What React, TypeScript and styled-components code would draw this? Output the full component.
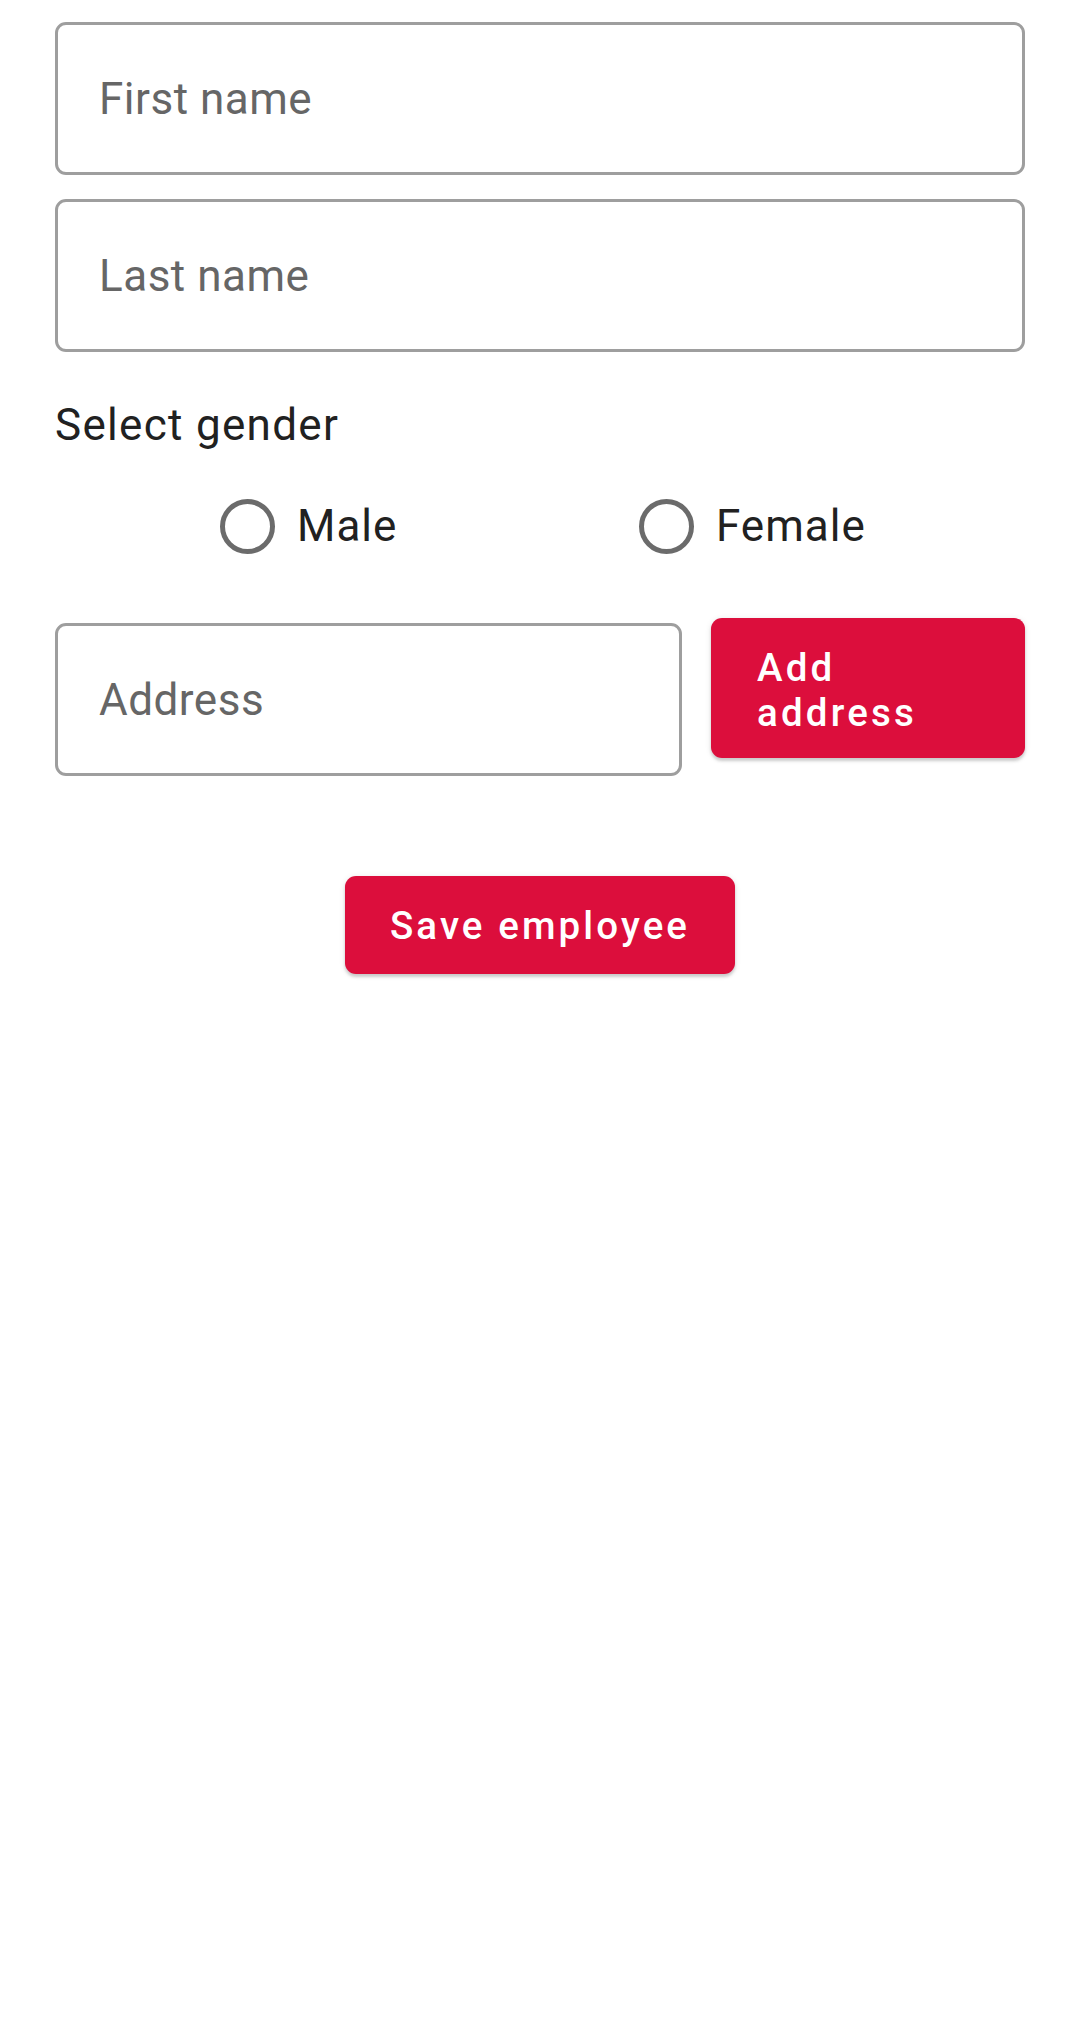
import styled, { createGlobalStyle } from "styled-components";

const GlobalStyle = createGlobalStyle`
  html, body {
    margin: 0;
    padding: 0;
    background: #ffffff;
  }
  body {
    font-family: Roboto, "Noto Sans", "Liberation Sans", sans-serif;
  }
`;

const Page = styled.div`
  width: 1080px;
  min-height: 2022px;
  box-sizing: border-box;
  padding: 22px 55px 0;
  display: flex;
  flex-direction: column;
`;

const Field = styled.input`
  box-sizing: border-box;
  width: 100%;
  height: 153px;
  border: 3px solid #9e9e9e;
  border-radius: 11px;
  padding: 0 41px;
  font-family: Roboto, "Liberation Sans", sans-serif;
  font-size: 44px;
  letter-spacing: 0.5px;
  color: #212121;
  outline: none;
  background: #fff;

  &::placeholder {
    color: #666666;
    opacity: 1;
  }
`;

const NameField = styled(Field)`
  & + & {
    margin-top: 24px;
  }
`;

const SectionLabel = styled.div`
  margin-top: 47px;
  font-size: 44px;
  line-height: 52px;
  color: #212121;
  letter-spacing: 1.3px;
`;

const RadioRow = styled.div`
  margin-top: 48px;
  padding-left: 165px;
  display: grid;
  grid-template-columns: 419px auto;
  align-items: center;
`;

const RadioOption = styled.label`
  display: flex;
  align-items: center;
  gap: 22px;
  font-size: 44px;
  line-height: 55px;
  color: #212121;
  letter-spacing: 1px;
  cursor: pointer;
`;

const RadioCircle = styled.span`
  box-sizing: border-box;
  width: 55px;
  height: 55px;
  border-radius: 50%;
  border: 5.5px solid #6b6b6b;
  flex: none;
`;

const AddressRow = styled.div`
  margin-top: 64px;
  display: flex;
  align-items: flex-start;
  gap: 29px;
`;

const AddressField = styled(Field)`
  width: 627px;
  flex: none;
  margin-top: 5px;
`;

const RedButton = styled.button`
  border: none;
  background: #dc0e3c;
  color: #ffffff;
  border-radius: 11px;
  font-family: Roboto, "Liberation Sans", sans-serif;
  font-weight: 500;
  font-size: 38.5px;
  letter-spacing: 3.2px;
  text-align: left;
  cursor: pointer;
  box-shadow: 0 3px 3px rgba(0, 0, 0, 0.16), 0 1px 6px rgba(0, 0, 0, 0.1);
`;

const AddButton = styled(RedButton)`
  width: 314px;
  flex: none;
  padding: 27px 46px 23px;
  line-height: 45px;
`;

const SaveButton = styled(RedButton)`
  align-self: center;
  margin-top: 100px;
  width: 390px;
  height: 98px;
  padding: 0;
  text-align: center;
  letter-spacing: 3.1px;
  line-height: 45px;
`;

export default function App() {
  return (
    <>
      <GlobalStyle />
      <Page>
        <NameField placeholder="First name" />
        <NameField placeholder="Last name" />
        <SectionLabel>Select gender</SectionLabel>
        <RadioRow>
          <RadioOption>
            <RadioCircle />
            Male
          </RadioOption>
          <RadioOption>
            <RadioCircle />
            Female
          </RadioOption>
        </RadioRow>
        <AddressRow>
          <AddressField placeholder="Address" />
          <AddButton>
            Add
            <br />
            address
          </AddButton>
        </AddressRow>
        <SaveButton>Save employee</SaveButton>
      </Page>
    </>
  );
}
